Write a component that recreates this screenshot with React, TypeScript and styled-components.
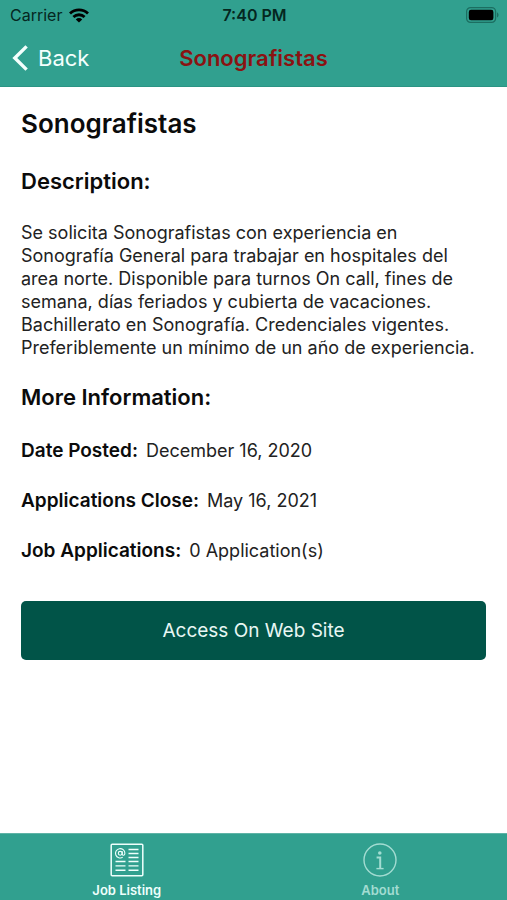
import React from "react";
import styled, { createGlobalStyle } from "styled-components";

const GlobalStyle = createGlobalStyle`
  *, *::before, *::after { box-sizing: border-box; }
  body {
    margin: 0;
    background: #ffffff;
    color: #0b0b0b;
    font-family: Inter, "Liberation Sans", sans-serif;
  }
  button { font-family: inherit; border: 0; padding: 0; cursor: pointer; }
`;

const Screen = styled.div`
  display: flex;
  flex-direction: column;
  min-height: 100vh;
`;

const Header = styled.header`
  background: #31a08f;
  border-bottom: 1px solid #2b9484;
`;

const StatusBar = styled.div`
  display: grid;
  grid-template-columns: 1fr auto 1fr;
  align-items: center;
  height: 30px;
  padding: 0 8px 0 10px;
  font-size: 16px;
  line-height: 20px;
  color: #05271f;
`;

const Carrier = styled.div`
  display: flex;
  align-items: center;
  gap: 7px;
`;

const Clock = styled.time`
  font-weight: 600;
`;

const Battery = styled.svg`
  justify-self: end;
`;

const NavBar = styled.nav`
  display: grid;
  grid-template-columns: 1fr auto 1fr;
  align-items: center;
  height: 56px;
  padding: 0 12px;
`;

const BackButton = styled.button`
  display: flex;
  align-items: center;
  justify-self: start;
  gap: 10px;
  background: none;
  color: #f4fffd;
  font-size: 22px;
  line-height: 28px;
`;

const NavTitle = styled.span`
  color: #8a1212;
  font-size: 22px;
  font-weight: 600;
  line-height: 28px;
`;

const Content = styled.main`
  flex: 1;
  padding: 22px 21px;
`;

const Title = styled.h1`
  margin: 0 0 28px;
  font-size: 26px;
  font-weight: 600;
  line-height: 30px;
`;

const SectionTitle = styled.h2`
  margin: 0;
  font-size: 22px;
  font-weight: 600;
  line-height: 28px;
`;

const Description = styled.p`
  margin: 26px 0 24px;
  color: #222222;
  font-size: 18px;
  line-height: 23px;
`;

const Facts = styled.dl`
  display: flex;
  flex-direction: column;
  gap: 26px;
  margin: 28px 0 38px;
`;

const Fact = styled.div`
  display: flex;
  align-items: baseline;
  gap: 8px;
  line-height: 24px;
`;

const FactLabel = styled.dt`
  font-size: 19px;
  font-weight: 600;
`;

const FactValue = styled.dd`
  margin: 0;
  color: #222222;
  font-size: 18px;
`;

const PrimaryButton = styled.button`
  width: 100%;
  height: 59px;
  border-radius: 5px;
  background: #015448;
  color: #e8f7f4;
  font-size: 19px;
  line-height: 24px;
`;

const TabBar = styled.nav`
  display: grid;
  grid-template-columns: 1fr 1fr;
  height: 67px;
  border-top: 1px solid #5fb3a6;
  background: #31a08f;
`;

const Tab = styled.button<{ $active?: boolean }>`
  display: flex;
  flex-direction: column;
  align-items: center;
  gap: 5px;
  padding-top: 9px;
  background: none;
  color: ${(p) => (p.$active ? "#effffc" : "#a3dcd2")};
  font-size: 13px;
  font-weight: 600;
  line-height: 16px;
`;

const facts = [
  { label: "Date Posted:", value: "December 16, 2020" },
  { label: "Applications Close:", value: "May 16, 2021" },
  { label: "Job Applications:", value: "0 Application(s)" },
];

function WifiIcon() {
  return (
    <svg width="20" height="15" viewBox="0 0 20 15" fill="none" stroke="#000" strokeWidth="2.8" aria-hidden="true">
      <path d="M1 5.4a13 13 0 0 1 18 0" />
      <path d="M4.4 9a8.1 8.1 0 0 1 11.2 0" />
      <path d="M10 14.6 6.8 11.4a4.6 4.6 0 0 1 6.4 0z" fill="#000" stroke="none" />
    </svg>
  );
}

function BatteryIcon() {
  return (
    <Battery width="33" height="16" viewBox="0 0 33 16" aria-hidden="true">
      <rect x="0.6" y="0.6" width="29" height="14.8" rx="4" fill="none" stroke="#1c6e61" strokeWidth="1.2" />
      <rect x="2.8" y="2.8" width="24.6" height="10.4" rx="2.2" fill="#000" />
      <path d="M31 5.6c2 .6 2 4.2 0 4.8z" fill="#1c6e61" />
    </Battery>
  );
}

function ChevronIcon() {
  return (
    <svg width="16" height="26" viewBox="0 0 16 26" fill="none" stroke="currentColor" strokeWidth="3.4" aria-hidden="true">
      <path d="M14.6 1.4 2.8 13l11.8 11.6" />
    </svg>
  );
}

function ListingIcon() {
  return (
    <svg width="34" height="34" viewBox="0 0 34 34" fill="none" stroke="currentColor" aria-hidden="true">
      <rect x="1.2" y="1.2" width="31.6" height="31.6" rx="1" strokeWidth="1.5" />
      <path
        strokeWidth="1.4"
        d="M18.5 6.5h10M18.5 10.5h10M18.5 14.5h10M5.5 18.5h10M18.5 18.5h10M5.5 22.9h10M18.5 22.9h10M5.5 27.3h10M18.5 27.3h10"
      />
      <circle cx="10.2" cy="10.3" r="1.9" strokeWidth="1.1" />
      <path
        strokeWidth="1.1"
        d="M12.3 8.2v3c0 1.6 2.6 1.5 2.6-.9a4.7 4.7 0 1 0-2.2 4"
      />
    </svg>
  );
}

function InfoIcon() {
  return (
    <svg width="34" height="34" viewBox="0 0 34 34" fill="none" stroke="currentColor" aria-hidden="true">
      <circle cx="17" cy="17" r="16" strokeWidth="1.4" />
      <circle cx="16.8" cy="10" r="1.8" fill="currentColor" stroke="none" />
      <path d="M13.6 14.4h3.6v11" strokeWidth="2" />
      <path d="M13.4 25.6h7.2" strokeWidth="1.4" />
    </svg>
  );
}

export default function App() {
  return (
    <>
      <GlobalStyle />
      <Screen>
        <Header>
          <StatusBar>
            <Carrier>
              Carrier
              <WifiIcon />
            </Carrier>
            <Clock>7:40 PM</Clock>
            <BatteryIcon />
          </StatusBar>
          <NavBar aria-label="Navigation">
            <BackButton type="button">
              <ChevronIcon />
              Back
            </BackButton>
            <NavTitle>Sonografistas</NavTitle>
          </NavBar>
        </Header>
        <Content>
          <Title>Sonografistas</Title>
          <SectionTitle>Description:</SectionTitle>
          <Description>
            Se solicita Sonografistas con experiencia en Sonografía General para trabajar en hospitales del area norte.
            Disponible para turnos On call, fines de semana, días feriados y cubierta de vacaciones. Bachillerato en
            Sonografía. Credenciales vigentes. Preferiblemente un mínimo de un año de experiencia.
          </Description>
          <SectionTitle>More Information:</SectionTitle>
          <Facts>
            {facts.map((fact) => (
              <Fact key={fact.label}>
                <FactLabel>{fact.label}</FactLabel>
                <FactValue>{fact.value}</FactValue>
              </Fact>
            ))}
          </Facts>
          <PrimaryButton type="button">Access On Web Site</PrimaryButton>
        </Content>
        <TabBar aria-label="Sections">
          <Tab type="button" $active aria-current="page">
            <ListingIcon />
            Job Listing
          </Tab>
          <Tab type="button">
            <InfoIcon />
            About
          </Tab>
        </TabBar>
      </Screen>
    </>
  );
}
